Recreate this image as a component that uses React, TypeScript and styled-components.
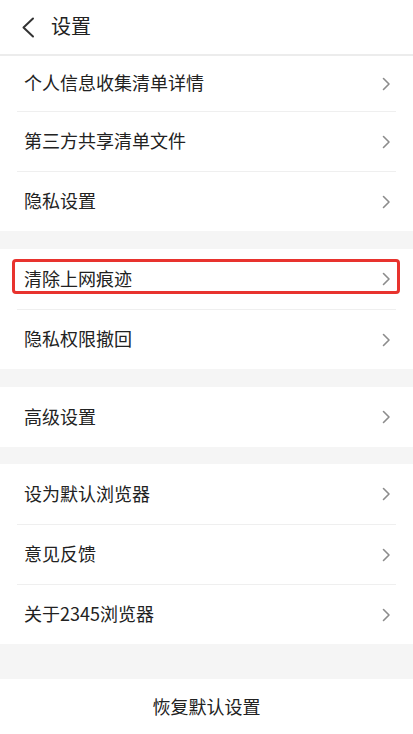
import React from "react";
import styled, { createGlobalStyle } from "styled-components";

const Global = createGlobalStyle`
  html, body { margin: 0; padding: 0; background: #ffffff; }
  body { font-family: "Noto Sans CJK SC", "Noto Sans", sans-serif; -webkit-font-smoothing: antialiased; }
  * { box-sizing: border-box; }
`;

const Page = styled.div`
  width: 413px;
  height: 734px;
  overflow: hidden;
  background: #f5f5f5;
  display: flex;
  flex-direction: column;
`;

const Header = styled.header`
  height: 56px;
  flex: none;
  background: #fff;
  border-bottom: 2px solid #ececec;
  display: flex;
  align-items: center;
  padding-left: 21px;
  gap: 16px;
`;

const Title = styled.h1`
  margin: -2px 0 0;
  font-size: 20px;
  font-weight: 400;
  color: #222;
  line-height: 1;
`;

const Section = styled.section<{ $gap: number }>`
  background: #fff;
  margin-bottom: ${(p) => p.$gap}px;
  display: flex;
  flex-direction: column;
`;

const Row = styled.div<{ $height?: number }>`
  position: relative;
  height: ${(p) => p.$height ?? 60}px;
  display: flex;
  align-items: center;
  justify-content: space-between;
  padding: 0 22px 0 24px;
`;

const RowWrap = styled.div`
  display: flex;
  flex-direction: column;
  & > * + * {
    border-top: 1px solid #efefef;
    margin: 0 17px;
    padding: 0 5px 0 7px;
  }
`;

const Label = styled.span`
  font-size: 18px;
  color: #222;
  line-height: 1;
  margin-top: -3px;
`;

const Highlight = styled.div`
  position: absolute;
  left: 12px;
  right: 13px;
  top: 10px;
  height: 35px;
  border: 3px solid #e8332e;
  border-radius: 4px;
  pointer-events: none;
`;

const FooterButton = styled.div`
  flex: 1;
  background: #fff;
  display: flex;
  align-items: flex-start;
  justify-content: center;
  padding-top: 18px;
  font-size: 18px;
  color: #222;
  line-height: 1;
`;

const Chevron = () => (
  <svg width="9" height="14" viewBox="0 0 9 14" fill="none">
    <path d="M1.5 1.5 L7 7 L1.5 12.5" stroke="#8c8c8c" strokeWidth="1.6" strokeLinecap="round" strokeLinejoin="round" />
  </svg>
);

const BackIcon = () => (
  <svg width="14" height="21" viewBox="0 0 14 21" fill="none">
    <path d="M12 1.5 L2.5 10.5 L12 19.5" stroke="#333" strokeWidth="2" strokeLinecap="round" strokeLinejoin="round" />
  </svg>
);

type Item = { label: string; height?: number; highlight?: boolean };

const sections: { items: Item[]; gap: number }[] = [
  {
    gap: 18,
    items: [
      { label: "个人信息收集清单详情", height: 55 },
      { label: "第三方共享清单文件" },
      { label: "隐私设置" },
    ],
  },
  {
    gap: 18,
    items: [{ label: "清除上网痕迹", highlight: true }, { label: "隐私权限撤回" }],
  },
  { gap: 17, items: [{ label: "高级设置" }] },
  {
    gap: 35,
    items: [{ label: "设为默认浏览器" }, { label: "意见反馈" }, { label: "关于2345浏览器" }],
  },
];

export default function App() {
  return (
    <>
      <Global />
      <Page>
        <Header>
          <BackIcon />
          <Title>设置</Title>
        </Header>
        {sections.map((s, i) => (
          <Section key={i} $gap={s.gap}>
            <RowWrap>
              {s.items.map((it) => (
                <Row key={it.label} $height={it.height}>
                  <Label>{it.label}</Label>
                  <Chevron />
                  {it.highlight && <Highlight />}
                </Row>
              ))}
            </RowWrap>
          </Section>
        ))}
        <FooterButton>恢复默认设置</FooterButton>
      </Page>
    </>
  );
}
